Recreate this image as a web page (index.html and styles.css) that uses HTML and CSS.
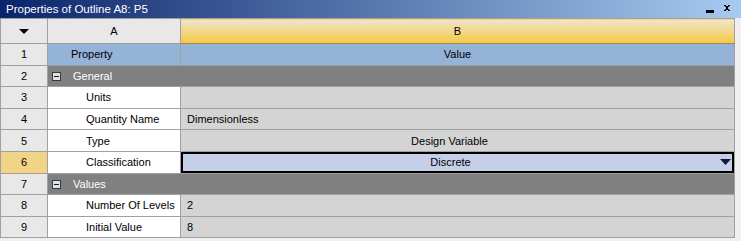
FILE: index.html
```html
<!DOCTYPE html>
<html lang="en">
<head>
  <meta charset="UTF-8" />
  <title>Properties of Outline A8: P5</title>
  <link rel="stylesheet" href="styles.css">
</head>
<body>
  <div class="panel">
    <div class="titlebar">
      <span class="title">Properties of Outline A8: P5</span>
      <span class="controls">
        <svg class="btn-min" width="8" height="14" viewBox="0 0 8 14"><rect x="0" y="10" width="8" height="3" fill="#000"/></svg>
        <svg class="btn-close" width="8" height="14" viewBox="0 0 8 14">
          <path d="M1 5h2v1h2v-1h2v1h-1v1h-1v2h1v1h1v1h-2v-1h-2v1h-2v-1h1v-1h1v-2h-1v-1h-1z" fill="#000"/>
        </svg>
      </span>
    </div>

    <table class="grid">
      <colgroup>
        <col class="c-num">
        <col class="c-a">
        <col class="c-b">
      </colgroup>
      <thead>
        <tr>
          <th class="num">
            <svg width="10" height="5" viewBox="0 0 10 5"><path d="M0 0h10l-5 5z" fill="#000"/></svg>
          </th>
          <th>A</th>
          <th class="col-active">B</th>
        </tr>
      </thead>
      <tbody>
        <tr class="caption">
          <td class="num">1</td>
          <td class="prop top">Property</td>
          <td class="val center">Value</td>
        </tr>
        <tr class="group">
          <td class="num">2</td>
          <td colspan="2"><span class="toggle"></span>General</td>
        </tr>
        <tr>
          <td class="num">3</td>
          <td class="prop">Units</td>
          <td class="val"></td>
        </tr>
        <tr>
          <td class="num">4</td>
          <td class="prop">Quantity Name</td>
          <td class="val">Dimensionless</td>
        </tr>
        <tr>
          <td class="num">5</td>
          <td class="prop">Type</td>
          <td class="val center combo-pad">Design Variable</td>
        </tr>
        <tr class="selected">
          <td class="num">6</td>
          <td class="prop">Classification</td>
          <td class="val editing">
            <div class="combo">
              <span class="combo-text">Discrete</span>
              <svg width="11" height="6" viewBox="0 0 11 6"><path d="M0 0h11l-5.5 6z" fill="#12173a"/></svg>
            </div>
          </td>
        </tr>
        <tr class="group">
          <td class="num">7</td>
          <td colspan="2"><span class="toggle"></span>Values</td>
        </tr>
        <tr>
          <td class="num">8</td>
          <td class="prop">Number Of Levels</td>
          <td class="val">2</td>
        </tr>
        <tr>
          <td class="num">9</td>
          <td class="prop">Initial Value</td>
          <td class="val">8</td>
        </tr>
      </tbody>
    </table>
  </div>
</body>
</html>
```

FILE: styles.css
```css
body {
  margin: 0;
  background: #f0f0f0;
  font-family: 'Liberation Sans', Arial, sans-serif;
  font-size: 11px;
  color: #000;
}

.panel {
  width: 741px;
}

.titlebar {
  height: 18px;
  display: flex;
  align-items: center;
  justify-content: space-between;
  background: linear-gradient(to right, #0a246a, #a6caf0);
  color: #fff;
  padding-left: 6px;
}

.title {
  font-size: 11.5px;
  line-height: 18px;
}

.controls {
  display: flex;
  gap: 9px;
  margin-right: 10px;
  align-self: flex-start;
}

.controls svg {
  display: block;
}

.grid {
  width: 735px;
  border-collapse: collapse;
  table-layout: fixed;
}

.c-num { width: 47px; }
.c-a { width: 133px; }

.grid th,
.grid td {
  border: 1px solid #a0a0a0;
  padding: 0;
  white-space: nowrap;
  overflow: hidden;
}

.grid thead tr {
  height: 25px;
}

.grid th {
  background: #e8e8e8;
  font-weight: normal;
  text-align: center;
}

.grid th svg {
  display: block;
  margin: 1px auto 0;
}

.grid th.col-active {
  background: linear-gradient(to bottom, #f0e4cc, #f5c843);
  border-bottom-color: #9c8a58;
}

.grid tbody tr {
  height: 21.6px;
}

.num {
  background: #e8e8e8;
  text-align: center;
}

.prop {
  background: #fff;
  padding-left: 38px !important;
}

.prop.top {
  padding-left: 23px !important;
}

.val {
  background: #d4d4d4;
  padding-left: 6px !important;
}

.val.center {
  text-align: center;
  padding-left: 0 !important;
}

.val.combo-pad {
  padding-right: 16px !important;
}

.caption .prop,
.caption .val {
  background: #95b3d7;
}

.group td[colspan] {
  background: #808080;
  color: #fff;
  padding-left: 4px;
}

.toggle {
  display: inline-block;
  vertical-align: -1px;
  width: 7px;
  height: 7px;
  margin-right: 12px;
  border: 1px solid #2e3a4e;
  background: #e2e2e2 linear-gradient(#1a1a1a, #1a1a1a) no-repeat center / 5px 1px;
}

.selected .num {
  background: #f2d487;
}

.val.editing {
  background: #c5cfe8;
  box-shadow: inset 0 0 0 2px #000;
  padding-left: 0 !important;
}

.combo {
  display: flex;
  align-items: center;
  padding-right: 3px;
}

.combo-text {
  flex: 1;
  text-align: center;
}

.combo svg {
  display: block;
}
```
